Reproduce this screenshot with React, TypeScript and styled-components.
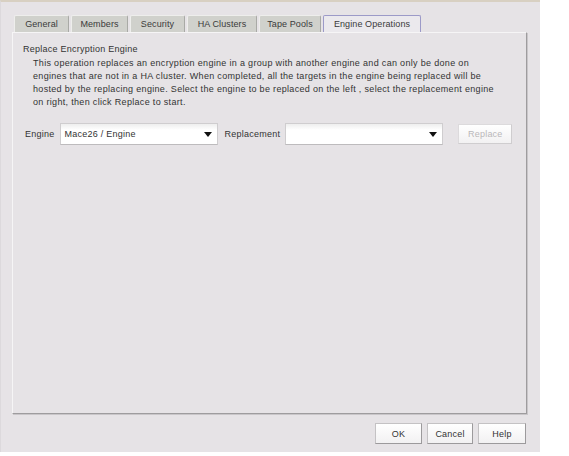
import React from "react";
import styled, { createGlobalStyle } from "styled-components";

const Global = createGlobalStyle`
  html, body { margin: 0; padding: 0; background: #ffffff; }
  body { font-family: "Liberation Sans", Arial, sans-serif; }
`;

const Dialog = styled.div`
  width: 540px;
  height: 452px;
  box-sizing: border-box;
  background: #e6e3e6;
  border-top: 2px solid #d8d0c2;
  border-left: 1px solid #dcd9dc;
  padding: 13px 13px 0 11px;
  display: flex;
  flex-direction: column;
  font-family: "Liberation Sans", Arial, sans-serif;
  font-size: 9px;
  letter-spacing: 0.25px;
  color: #333333;
`;

const TabBar = styled.div`
  display: flex;
  align-items: flex-end;
  gap: 2px;
  padding-left: 2px;
  height: 17px;
`;

const Tab = styled.div<{ $active?: boolean; $w: number }>`
  width: ${(p) => p.$w}px;
  height: 17px;
  box-sizing: border-box;
  display: flex;
  align-items: center;
  justify-content: center;
  font-size: 9px;
  letter-spacing: 0.1px;
  color: #3a3a3a;
  border-radius: 2px 2px 0 0;
  ${(p) =>
    p.$active
      ? `background: #ebe9ed; border: 1px solid #9c9ac8; border-bottom: none; position: relative; z-index: 1;`
      : `background: #d0d1cc; border-top: 1px solid #eeeeec; border-left: 1px solid #eeeeec; border-right: 1px solid #a9aaa6;`}
`;

const Panel = styled.div`
  height: 382px;
  box-sizing: border-box;
  border-top: 1px solid #f6f5f6;
  border-left: 1px solid #f6f5f6;
  border-right: 1px solid #9e9c9e;
  border-bottom: 1px solid #9e9c9e;
  box-shadow: 1px 1px 0 #c9c6c9;
  padding: 10px 10px 0 10px;
  display: flex;
  flex-direction: column;
`;

const Title = styled.div`
  line-height: 13px;
`;

const Description = styled.p`
  margin: 1px 0 0 10px;
  line-height: 13px;
  letter-spacing: 0.32px;
  white-space: nowrap;
`;

const FieldRow = styled.div`
  display: flex;
  align-items: center;
  margin-top: 14px;
  height: 22px;
  padding-left: 2px;
`;

const Label = styled.span`
  margin-right: 5px;
`;

const Combo = styled.div<{ $w: number }>`
  width: ${(p) => p.$w}px;
  height: 22px;
  box-sizing: border-box;
  border: 1px solid #cfcdcf;
  border-bottom-color: #bdbbbd;
  background: linear-gradient(#eeeeee, #ffffff 30%, #ffffff);
  display: flex;
  align-items: center;
  padding: 0 5px 0 4px;
  margin-right: 7px;
`;

const ComboText = styled.span`
  flex: 1;
`;

const Arrow = styled.svg`
  width: 8px;
  height: 5px;
`;

const Button = styled.button<{ $w: number; $h?: number; $disabled?: boolean }>`
  width: ${(p) => p.$w}px;
  height: ${(p) => p.$h ?? 20}px;
  box-sizing: border-box;
  font-family: "Liberation Sans", Arial, sans-serif;
  font-size: 9px;
  letter-spacing: 0.2px;
  padding: 0;
  background: linear-gradient(#ffffff, #f2f1f2);
  border: 1px solid ${(p) => (p.$disabled ? "#dcdadc" : "#c4c2c4")};
  border-right-color: ${(p) => (p.$disabled ? "#cfcdcf" : "#9c9a9c")};
  border-bottom-color: ${(p) => (p.$disabled ? "#cfcdcf" : "#9c9a9c")};
  color: ${(p) => (p.$disabled ? "#b9b7b9" : "#333333")};
`;

const ReplaceButton = styled(Button)`
  margin-left: 8px;
`;

const Footer = styled.div`
  display: flex;
  justify-content: flex-end;
  gap: 5px;
  padding: 9px 1px 0 0;
`;

const DropArrow = () => (
  <Arrow viewBox="0 0 8 5">
    <polygon points="0,0 8,0 4,5" fill="#111" />
  </Arrow>
);

const tabs: [string, number][] = [
  ["General", 55],
  ["Members", 57],
  ["Security", 55],
  ["HA Clusters", 70],
  ["Tape Pools", 62],
];

const lines = [
  "This operation replaces an encryption engine in a group with another engine and can only be done on",
  "engines that are not in a HA cluster. When completed, all the targets in the engine being replaced will be",
  "hosted by the replacing engine. Select the engine to be replaced on the left , select the replacement engine",
  "on right, then click Replace to start.",
];

export default function App() {
  return (
    <>
      <Global />
      <Dialog>
        <TabBar>
          {tabs.map(([t, w]) => (
            <Tab key={t} $w={w}>
              {t}
            </Tab>
          ))}
          <Tab $active $w={98}>
            Engine Operations
          </Tab>
        </TabBar>
        <Panel>
          <Title>Replace Encryption Engine</Title>
          <Description>
            {lines.map((l, i) => (
              <React.Fragment key={i}>
                {l}
                {i < lines.length - 1 && <br />}
              </React.Fragment>
            ))}
          </Description>
          <FieldRow>
            <Label>Engine</Label>
            <Combo $w={158}>
              <ComboText>Mace26 / Engine</ComboText>
              <DropArrow />
            </Combo>
            <Label>Replacement</Label>
            <Combo $w={158}>
              <ComboText />
              <DropArrow />
            </Combo>
            <ReplaceButton $w={54} $disabled>
              Replace
            </ReplaceButton>
          </FieldRow>
        </Panel>
        <Footer>
          <Button $w={47} $h={21}>OK</Button>
          <Button $w={46} $h={21}>Cancel</Button>
          <Button $w={48} $h={21}>Help</Button>
        </Footer>
      </Dialog>
    </>
  );
}
